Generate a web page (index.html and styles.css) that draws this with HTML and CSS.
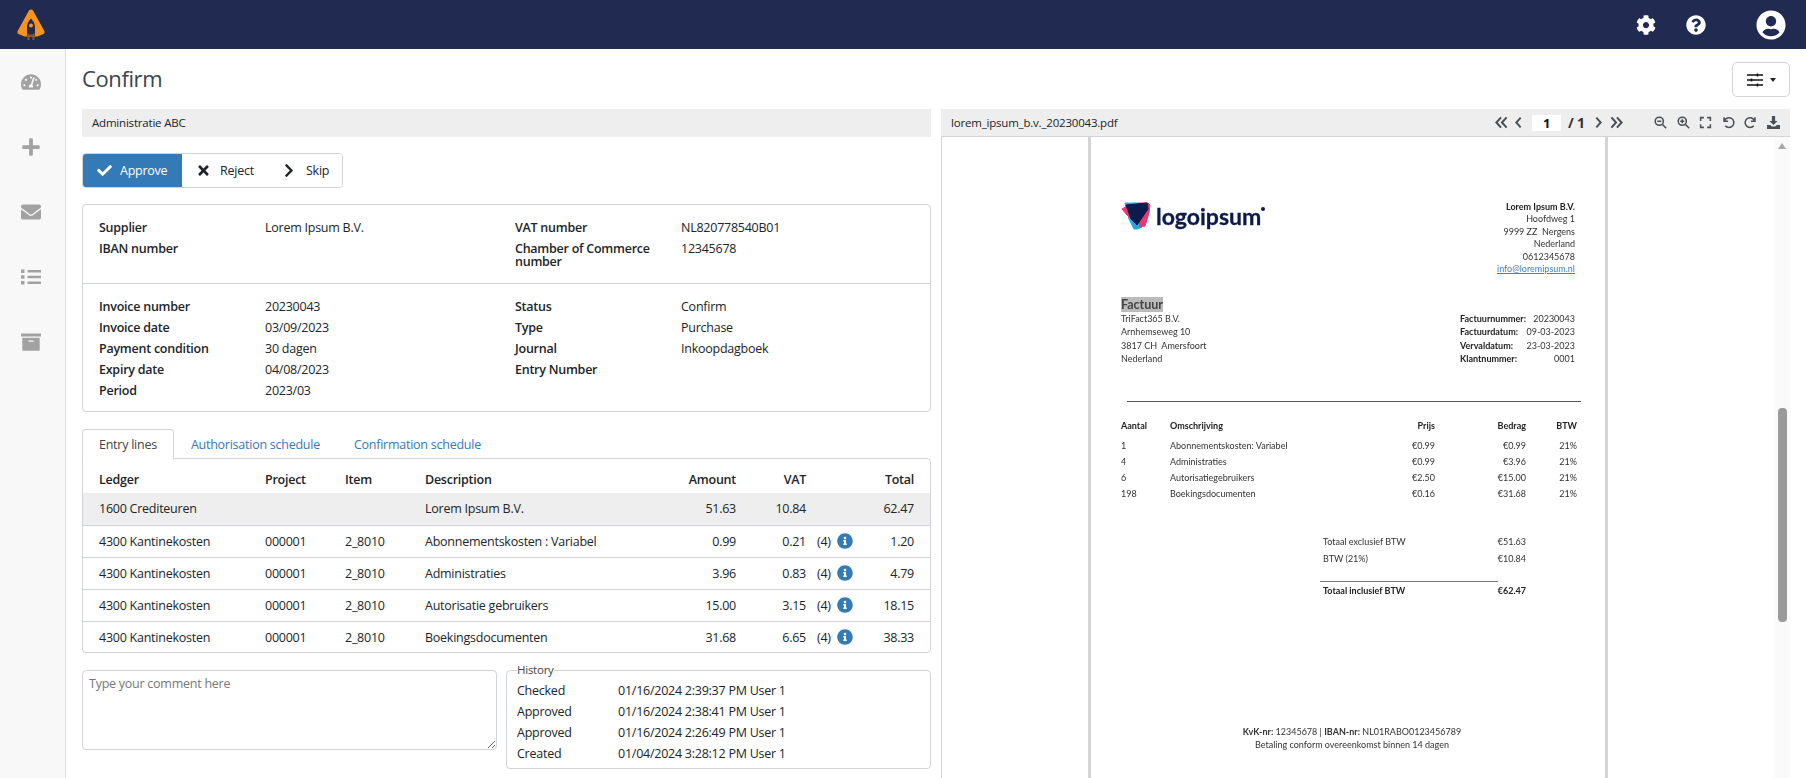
FILE: index.html
```html
<!DOCTYPE html>
<html lang="en">
<head>
<meta charset="utf-8">
<title>Confirm</title>
<link rel="stylesheet" href="styles.css">
</head>
<body>
<svg class="defs" aria-hidden="true"><symbol id="i-info" viewBox="0 0 512 512"><path d="M256 8C119.043 8 8 119.083 8 256c0 136.997 111.043 248 248 248s248-111.003 248-248C504 119.083 392.957 8 256 8zm0 110c23.196 0 42 18.804 42 42s-18.804 42-42 42-42-18.804-42-42 18.804-42 42-42zm56 254c0 6.627-5.373 12-12 12h-88c-6.627 0-12-5.373-12-12v-24c0-6.627 5.373-12 12-12h12v-64h-12c-6.627 0-12-5.373-12-12v-24c0-6.627 5.373-12 12-12h64c6.627 0 12 5.373 12 12v100h12c6.627 0 12 5.373 12 12v24z"/></symbol></svg>
<header class="topbar">
  <svg class="brand" viewBox="0 0 28 32"><path class="brand-a" d="M14 3 3 23 8 25H20L25 23Z"/><path class="brand-hole" d="M14 9.500C11.500 12 10 15 10 18V27H18V18C18 15 16.500 12 14 9.500Z"/><circle class="brand-dot" cx="14" cy="16.500" r="2"/><path class="brand-r" d="M10.500 31V24L12.500 25.500H15.500L17.500 24V31H15.500V28H12.500V31Z"/></svg>
  <div class="top-actions">
    <svg class="ti ti-gear" viewBox="0 0 512 512"><path d="M487.4 315.7l-42.6-24.6c4.300-23.200 4.300-47 0-70.200l42.600-24.600c4.900-2.800 7.100-8.600 5.500-14-11.100-35.600-30-67.800-54.700-94.600-3.800-4.100-10-5.100-14.800-2.300L380.800 110c-17.900-15.400-38.500-27.300-60.800-35.100V25.800c0-5.600-3.900-10.500-9.400-11.700-36.700-8.200-74.300-7.800-109.200 0-5.500 1.200-9.400 6.100-9.400 11.700V75c-22.200 7.900-42.800 19.800-60.800 35.100L88.700 85.500c-4.900-2.800-11-1.900-14.800 2.300-24.700 26.700-43.600 58.900-54.700 94.600-1.700 5.400.6 11.200 5.500 14L67.300 221c-4.300 23.200-4.300 47 0 70.200l-42.600 24.600c-4.900 2.800-7.100 8.600-5.500 14 11.100 35.600 30 67.800 54.700 94.600 3.800 4.100 10 5.100 14.800 2.300l42.600-24.600c17.900 15.400 38.500 27.300 60.800 35.100v49.200c0 5.600 3.900 10.500 9.400 11.700 36.700 8.200 74.300 7.800 109.200 0 5.500-1.200 9.400-6.100 9.400-11.700v-49.200c22.200-7.900 42.800-19.800 60.800-35.100l42.600 24.600c4.900 2.800 11 1.900 14.800-2.300 24.700-26.700 43.600-58.900 54.700-94.600 1.500-5.500-.7-11.300-5.600-14.100zM256 336c-44.100 0-80-35.900-80-80s35.900-80 80-80 80 35.900 80 80-35.900 80-80 80z"/></svg>
    <svg class="ti ti-help" viewBox="0 0 512 512"><path d="M504 256c0 136.997-111.043 248-248 248S8 392.997 8 256C8 119.083 119.043 8 256 8s248 111.083 248 248zM262.655 90c-54.497 0-89.255 22.957-116.549 63.758-3.536 5.286-2.353 12.415 2.715 16.258l34.699 26.310c5.205 3.947 12.621 3.008 16.665-2.122 17.864-22.658 30.113-35.797 57.303-35.797 20.429 0 45.698 13.148 45.698 32.958 0 14.976-12.363 22.667-32.534 33.976C247.128 238.528 216 254.941 216 296v4c0 6.627 5.373 12 12 12h56c6.627 0 12-5.373 12-12v-1.333c0-28.462 83.186-29.647 83.186-106.667 0-58.002-60.165-102-116.531-102zM256 338c-25.365 0-46 20.635-46 46 0 25.364 20.635 46 46 46s46-20.636 46-46c0-25.365-20.635-46-46-46z"/></svg>
    <svg class="ti ti-user" viewBox="0 0 496 512"><path d="M248 8C111 8 0 119 0 256s111 248 248 248 248-111 248-248S385 8 248 8zm0 96c48.600 0 88 39.400 88 88s-39.400 88-88 88-88-39.400-88-88 39.400-88 88-88zm0 344c-58.700 0-111.300-26.600-146.500-68.200 18.800-35.400 55.600-59.800 98.500-59.800 2.400 0 4.800.4 7.100 1.100 13 4.200 26.600 6.900 40.900 6.900 14.300 0 28-2.700 40.900-6.900 2.300-.7 4.700-1.100 7.100-1.100 42.900 0 79.700 24.400 98.500 59.800C359.300 421.400 306.700 448 248 448z"/></svg>
  </div>
</header>
<div class="shell">
  <nav class="sidebar">
    <svg class="si" viewBox="0 0 576 512"><path d="M288 32C128.940 32 0 160.940 0 320c0 52.800 14.250 102.260 39.060 144.800 5.610 9.620 16.300 15.200 27.440 15.200h443c11.140 0 21.830-5.580 27.440-15.200C561.750 422.260 576 372.800 576 320c0-159.060-128.940-288-288-288zm0 64c14.710 0 26.580 10.130 30.320 23.650-1.110 2.260-2.640 4.230-3.450 6.670l-9.220 27.670c-5.130 3.490-10.970 6.010-17.640 6.010-17.670 0-32-14.330-32-32S270.330 96 288 96zM96 384c-17.670 0-32-14.330-32-32s14.330-32 32-32 32 14.330 32 32-14.330 32-32 32zm48-160c-17.670 0-32-14.330-32-32s14.330-32 32-32 32 14.330 32 32-14.330 32-32 32zm246.770-72.410l-61.330 184C343.130 347.330 352 364.540 352 384c0 11.720-3.380 22.550-8.880 32H232.880c-5.500-9.450-8.880-20.280-8.880-32 0-33.940 26.500-61.430 59.900-63.590l61.340-184.010c4.170-12.560 17.730-19.450 30.360-15.170 12.570 4.190 19.350 17.790 15.170 30.360zm14.660 57.200l15.520-46.550c3.470-1.290 7.130-2.230 11.050-2.230 17.670 0 32 14.330 32 32s-14.330 32-32 32c-11.380-.01-20.890-6.280-26.570-15.220zM480 384c-17.670 0-32-14.330-32-32s14.330-32 32-32 32 14.330 32 32-14.330 32-32 32z"/></svg>
    <svg class="si" viewBox="0 0 448 512"><path d="M416 208H272V64c0-17.670-14.330-32-32-32h-32c-17.670 0-32 14.330-32 32v144H32c-17.670 0-32 14.330-32 32v32c0 17.670 14.330 32 32 32h144v144c0 17.670 14.330 32 32 32h32c17.670 0 32-14.330 32-32V304h144c17.670 0 32-14.330 32-32v-32c0-17.670-14.330-32-32-32z"/></svg>
    <svg class="si" viewBox="0 0 512 512"><path d="M502.300 190.800c3.900-3.100 9.700-.2 9.700 4.700V400c0 26.500-21.500 48-48 48H48c-26.500 0-48-21.500-48-48V195.600c0-5 5.700-7.800 9.700-4.700 22.400 17.400 52.100 39.500 154.100 113.600 21.100 15.400 56.700 47.800 92.200 47.600 35.700.3 72-32.800 92.300-47.600 102-74.100 131.600-96.300 154-113.700zM256 320c23.200.4 56.600-29.200 73.400-41.400 132.700-96.300 142.800-104.700 173.400-128.700 5.800-4.500 9.200-11.500 9.200-18.900v-19c0-26.500-21.500-48-48-48H48C21.500 64 0 85.500 0 112v19c0 7.400 3.400 14.300 9.200 18.900 30.600 23.900 40.700 32.400 173.400 128.700 16.800 12.200 50.200 41.800 73.400 41.400z"/></svg>
    <svg class="si" viewBox="0 0 20 20"><path d="M0 2.500h3.500v3.500H0zM0 8.200h3.500v3.500H0zM0 14h3.500v3.500H0zM6.500 3h13.500v2.500H6.500zM6.500 8.700h13.500v2.500H6.500zM6.500 14.500h13.500v2.500H6.500z"/></svg>
    <svg class="si" viewBox="0 0 20 20"><path d="M0 1.500h20v3H0zM1.300 5.800h17.400v12.200a.8.8 0 0 1-.8.8H2.100a.8.8 0 0 1-.8-.8zM7.500 8.500v1.300h5v-1.300z" fill-rule="evenodd"/></svg>
  </nav>
  <main class="main">
    <div class="titlebar">
      <h1 class="title">Confirm</h1>
      <button class="filter-btn" type="button">
        <svg class="sliders" viewBox="0 0 16 14"><path d="M0 2h16M0 7h16M0 12h16" /><path class="knob" d="M10.500 0.500v3M4.500 5.500v3M10.500 10.500v3"/></svg>
        <span class="caret"></span>
      </button>
    </div>
    <div class="columns">
      <section class="left">
        <div class="admin-bar">Administratie ABC</div>
        <div class="btn-group">
          <button class="btn btn-approve" type="button"><svg class="bi" viewBox="0 0 512 512"><path d="M173.898 439.404l-166.400-166.400c-9.997-9.997-9.997-26.206 0-36.204l36.203-36.204c9.997-9.998 26.207-9.998 36.204 0L192 312.690 432.095 72.596c9.997-9.997 26.207-9.997 36.204 0l36.203 36.204c9.997 9.997 9.997 26.206 0 36.204l-294.400 294.401c-9.998 9.997-26.207 9.997-36.204-.001z"/></svg>Approve</button>
          <button class="btn btn-reject" type="button"><svg class="bi bi-x" viewBox="0 0 352 512"><path d="M242.720 256l100.070-100.070c12.280-12.280 12.280-32.190 0-44.480l-22.240-22.240c-12.280-12.280-32.190-12.280-44.480 0L176 189.280 75.930 89.210c-12.280-12.280-32.190-12.280-44.480 0L9.210 111.450c-12.280 12.280-12.280 32.190 0 44.480L109.280 256 9.210 356.070c-12.280 12.280-12.280 32.190 0 44.480l22.240 22.240c12.280 12.280 32.200 12.280 44.480 0L176 322.720l100.070 100.070c12.280 12.280 32.200 12.280 44.480 0l22.240-22.240c12.280-12.280 12.280-32.190 0-44.480L242.720 256z"/></svg>Reject</button>
          <button class="btn btn-skip" type="button"><svg class="bi bi-c" viewBox="0 0 320 512"><path d="M285.476 272.971L91.132 467.314c-9.373 9.373-24.569 9.373-33.941 0l-22.667-22.667c-9.357-9.357-9.375-24.522-.04-33.901L188.505 256 34.484 101.255c-9.335-9.379-9.317-24.544.04-33.901l22.667-22.667c9.373-9.373 24.569-9.373 33.941 0L285.475 239.030c9.373 9.372 9.373 24.568.001 33.941z"/></svg>Skip</button>
        </div>
        <div class="card details">
          <div class="detail-sec sec-top">
            <dl class="dl">
              <dt>Supplier</dt><dd>Lorem Ipsum B.V.</dd>
              <dt>IBAN number</dt><dd></dd>
            </dl>
            <dl class="dl">
              <dt>VAT number</dt><dd>NL820778540B01</dd>
              <dt class="two">Chamber of Commerce number</dt><dd>12345678</dd>
            </dl>
          </div>
          <div class="detail-sec sec-bottom">
            <dl class="dl">
              <dt>Invoice number</dt><dd>20230043</dd>
              <dt>Invoice date</dt><dd>03/09/2023</dd>
              <dt>Payment condition</dt><dd>30 dagen</dd>
              <dt>Expiry date</dt><dd>04/08/2023</dd>
              <dt>Period</dt><dd>2023/03</dd>
            </dl>
            <dl class="dl">
              <dt>Status</dt><dd>Confirm</dd>
              <dt>Type</dt><dd>Purchase</dd>
              <dt>Journal</dt><dd>Inkoopdagboek</dd>
              <dt>Entry Number</dt><dd></dd>
            </dl>
          </div>
        </div>
        <div class="tabs">
          <span class="tab tab-active">Entry lines</span>
          <span class="tab">Authorisation schedule</span>
          <span class="tab">Confirmation schedule</span>
        </div>
        <div class="table-wrap">
          <table class="lines">
            <colgroup><col class="c1"><col class="c2"><col class="c3"><col class="c4"><col class="c5"><col class="c6"><col class="c7"><col class="c8"></colgroup>
            <thead>
              <tr><th>Ledger</th><th>Project</th><th>Item</th><th>Description</th><th class="num">Amount</th><th class="num">VAT</th><th></th><th class="num">Total</th></tr>
            </thead>
            <tbody>
              <tr class="hl"><td>1600 Crediteuren</td><td></td><td></td><td>Lorem Ipsum B.V.</td><td class="num">51.63</td><td class="num">10.84</td><td></td><td class="num">62.47</td></tr>
              <tr><td>4300 Kantinekosten</td><td>000001</td><td>2_8010</td><td>Abonnementskosten : Variabel</td><td class="num">0.99</td><td class="num">0.21</td><td class="note">(4) <svg class="info"><use href="#i-info"/></svg></td><td class="num">1.20</td></tr>
              <tr><td>4300 Kantinekosten</td><td>000001</td><td>2_8010</td><td>Administraties</td><td class="num">3.96</td><td class="num">0.83</td><td class="note">(4) <svg class="info"><use href="#i-info"/></svg></td><td class="num">4.79</td></tr>
              <tr><td>4300 Kantinekosten</td><td>000001</td><td>2_8010</td><td>Autorisatie gebruikers</td><td class="num">15.00</td><td class="num">3.15</td><td class="note">(4) <svg class="info"><use href="#i-info"/></svg></td><td class="num">18.15</td></tr>
              <tr><td>4300 Kantinekosten</td><td>000001</td><td>2_8010</td><td>Boekingsdocumenten</td><td class="num">31.68</td><td class="num">6.65</td><td class="note">(4) <svg class="info"><use href="#i-info"/></svg></td><td class="num">38.33</td></tr>
            </tbody>
          </table>
        </div>
        <div class="bottom-row">
          <textarea class="comment" placeholder="Type your comment here"></textarea>
          <fieldset class="history">
            <legend>History</legend>
            <div class="hist-row"><span>Checked</span><span>01/16/2024 2:39:37 PM User 1</span></div>
            <div class="hist-row"><span>Approved</span><span>01/16/2024 2:38:41 PM User 1</span></div>
            <div class="hist-row"><span>Approved</span><span>01/16/2024 2:26:49 PM User 1</span></div>
            <div class="hist-row"><span>Created</span><span>01/04/2024 3:28:12 PM User 1</span></div>
          </fieldset>
        </div>
      </section>
      <section class="viewer">
        <div class="pdf-bar">
          <span class="pdf-name">lorem_ipsum_b.v._20230043.pdf</span>
          <div class="pdf-tools">
            <svg class="pi pi-w" viewBox="0 0 14 14"><path d="M6.500 1.500 1.500 7l5 5.500M12.500 1.500 7.500 7l5 5.500"/></svg>
            <svg class="pi pi-n" viewBox="0 0 8 14"><path d="M6.500 1.500 1.500 7l5 5.500"/></svg>
            <span class="page-input">1</span>
            <span class="page-total">/ 1</span>
            <svg class="pi pi-n" viewBox="0 0 8 14"><path d="M1.500 1.500 6.500 7l-5 5.500"/></svg>
            <svg class="pi pi-w" viewBox="0 0 14 14"><path d="M1.500 1.500 6.500 7l-5 5.500M7.500 1.500 12.500 7l-5 5.500"/></svg>
            <span class="tool-gap"></span>
            <svg class="pz" viewBox="0 0 16 16"><circle cx="6.500" cy="6.500" r="5"/><path d="M10.500 10.500 15 15M4 6.500h5"/></svg>
            <svg class="pz" viewBox="0 0 16 16"><circle cx="6.500" cy="6.500" r="5"/><path d="M10.500 10.500 15 15M4 6.500h5M6.500 4v5"/></svg>
            <svg class="pz" viewBox="0 0 16 16"><path d="M2 6V2h4M10 2h4v4M14 10v4h-4M6 14H2v-4"/></svg>
            <svg class="pz" viewBox="0 0 16 16"><path d="M3 6a6 6 0 1 1 1 6M2.500 1.500V6.500H7.500"/></svg>
            <svg class="pz" viewBox="0 0 16 16"><path d="M13 6a6 6 0 1 0-1 6M13.500 1.500V6.500H8.500"/></svg>
            <svg class="pd" viewBox="0 0 16 16"><path d="M6 0h4v6h3L8 11 3 6h3zM0 11h4l2 2h4l2-2h4v5H0z"/></svg>
          </div>
        </div>
        <div class="pdf-body">
          <div class="pdf-scroll">
            <article class="page">
              <div class="inv-head">
                <div class="logo">
                  <svg class="logo-mark" viewBox="0 0 30 30"><path class="lm-blue" d="M4 2H16L21 26 16 28 13 28 8 18Z"/><path class="lm-pink" d="M1 8 8 4 13 20 6 14Z"/><path class="lm-pink" d="M16 2H27L29 4 28 12 24 25 19 26Z"/><path class="lm-navy" d="M5 4 26 2 27 8 16 24 10 18Z"/></svg>
                  <span class="logo-text">logoipsum</span><span class="logo-dot"></span>
                </div>
                <address class="inv-from">
                  <b>Lorem Ipsum B.V.</b>
                  <span>Hoofdweg 1</span>
                  <span>9999 ZZ&nbsp; Nergens</span>
                  <span>Nederland</span>
                  <span>0612345678</span>
                  <span class="inv-mail">info@loremipsum.nl</span>
                </address>
              </div>
              <div class="inv-meta">
                <div class="inv-to">
                  <h2 class="inv-title"><span>Factuur</span></h2>
                  <span>TriFact365 B.V.</span>
                  <span>Arnhemseweg 10</span>
                  <span>3817 CH&nbsp; Amersfoort</span>
                  <span>Nederland</span>
                </div>
                <div class="inv-refs">
                  <b>Factuurnummer:</b><span>20230043</span>
                  <b>Factuurdatum:</b><span>09-03-2023</span>
                  <b>Vervaldatum:</b><span>23-03-2023</span>
                  <b>Klantnummer:</b><span>0001</span>
                </div>
              </div>
              <hr class="inv-rule">
              <div class="inv-lines">
                <b>Aantal</b><b>Omschrijving</b><b class="r">Prijs</b><b class="r">Bedrag</b><b class="r">BTW</b>
                <span>1</span><span>Abonnementskosten: Variabel</span><span class="r">€0.99</span><span class="r">€0.99</span><span class="r">21%</span>
                <span>4</span><span>Administraties</span><span class="r">€0.99</span><span class="r">€3.96</span><span class="r">21%</span>
                <span>6</span><span>Autorisatiegebruikers</span><span class="r">€2.50</span><span class="r">€15.00</span><span class="r">21%</span>
                <span>198</span><span>Boekingsdocumenten</span><span class="r">€0.16</span><span class="r">€31.68</span><span class="r">21%</span>
              </div>
              <div class="inv-totals">
                <div class="tot-row"><span>Totaal exclusief BTW</span><span>€51.63</span></div>
                <div class="tot-row"><span>BTW (21%)</span><span>€10.84</span></div>
                <hr class="tot-rule">
                <div class="tot-row"><b>Totaal inclusief BTW</b><b>€62.47</b></div>
              </div>
              <footer class="inv-foot">
                <p><b>KvK-nr:</b> 12345678 | <b>IBAN-nr:</b> NL01RABO0123456789</p>
                <p>Betaling conform overeenkomst binnen 14 dagen</p>
              </footer>
            </article>
          </div>
          <div class="scrollbar"><span class="sb-up"></span><span class="sb-thumb"></span></div>
        </div>
      </section>
    </div>
  </main>
</div>
</body>
</html>
```
FILE: styles.css
```css
* { box-sizing: border-box; }
html, body { margin: 0; height: 778px; overflow: hidden; }
body { font-family: "Open Sans", "Noto Sans", sans-serif; font-size: 12.500px; letter-spacing: -0.25px; color: #212529; background: #fff; }
.defs { display: none; }

.topbar { height: 49px; background: #212a50; display: flex; align-items: center; justify-content: space-between; padding: 0 20px 0 17px; }
.brand { width: 28px; height: 32px; }
.brand-a { fill: #f7941d; stroke: #f7941d; stroke-width: 5; stroke-linejoin: round; }
.brand-hole { fill: #212a50; }
.brand-dot { fill: #f7941d; }
.brand-r { fill: #8a5a2c; }
.top-actions { display: flex; align-items: center; }
.ti { fill: #fff; display: block; }
.ti-gear { width: 20px; height: 20px; }
.ti-help { width: 20px; height: 20px; margin-left: 30px; }
.ti-user { width: 30px; height: 30px; margin-left: 50px; }

.shell { display: flex; height: 729px; }
.sidebar { width: 66px; flex: none; background: #f8f8f8; border-right: 1px solid #ddd; display: flex; flex-direction: column; align-items: center; padding-top: 23px; gap: 45px; padding-right: 4px; }
.si { width: 20px; height: 20px; fill: #a2a2a2; display: block; }

.main { flex: 1; min-width: 0; padding: 0 16px; }
.titlebar { height: 60px; display: flex; justify-content: space-between; align-items: flex-start; padding-top: 13px; }
.title { margin: -1px 0 0; font-size: 22px; font-weight: 400; letter-spacing: -0.4px; line-height: 34px; color: #3a4550; }
.filter-btn { width: 58px; height: 35px; background: #fff; border: 1px solid #d0d3d8; border-radius: 5px; display: flex; align-items: center; justify-content: center; gap: 7px; padding: 0; }
.sliders { width: 16px; height: 14px; fill: none; stroke: #111; stroke-width: 1.6; }
.caret { border-top: 4px solid #222; border-left: 3.500px solid transparent; border-right: 3.500px solid transparent; }

.columns { display: grid; grid-template-columns: 849px 849px; column-gap: 10px; }

.admin-bar { height: 28px; background: #eee; line-height: 28px; padding-left: 10px; font-size: 11.500px; letter-spacing: -0.2px; }
.btn-group { display: inline-flex; height: 35px; margin-top: 16px; margin-bottom: 16px; border: 1px solid #d0d3d8; border-radius: 4px; overflow: hidden; vertical-align: top; }
.btn { border: 0; background: #fff; display: flex; align-items: center; font: inherit; letter-spacing: inherit; color: #212529; padding: 0; }
.btn-approve { width: 100px; margin: -1px 0 -1px -1px; background: #337ab7; color: #fff; padding-left: 15px; }
.btn-reject { width: 85px; padding-left: 16px; }
.btn-skip { width: 75px; padding-left: 17px; }
.bi { width: 15px; height: 15px; fill: currentColor; margin-right: 8px; flex: none; }
.bi-x { width: 11px; margin-right: 11px; }
.bi-c { width: 10px; margin-right: 12px; }

.card { border: 1px solid #d0d3d8; border-radius: 4px; }
.details { height: 208px; }
.detail-sec { display: grid; grid-template-columns: 416px 1fr; padding: 12px 16px 0; }
.sec-top { height: 79px; border-bottom: 1px solid #d0d3d8; }
.dl { display: grid; grid-template-columns: 166px 1fr; grid-auto-rows: minmax(21px, auto); margin: 0; line-height: 21px; align-content: start; }
.dl dt { font-weight: 600; }
.dl dd { margin: 0; }
.dl dt.two { line-height: 13px; padding-top: 4px; }

.tabs { display: flex; height: 30px; margin-top: 17px; margin-bottom: -1px; position: relative; z-index: 1; }
.tab { padding: 0 17px; line-height: 31px; color: #337ab7; }
.tab-active { color: #444; background: #fff; border: 1px solid #d0d3d8; border-bottom-color: #fff; border-radius: 4px 4px 0 0; height: 31px; padding: 0 16px; line-height: 29px; }
.table-wrap { border: 1px solid #d0d3d8; border-radius: 0 4px 4px 4px; height: 195px; overflow: hidden; }
.lines { width: 100%; border-collapse: collapse; table-layout: fixed; }
.c1 { width: 182px; } .c2 { width: 80px; } .c3 { width: 80px; } .c4 { width: 240px; } .c5 { width: 71px; } .c6 { width: 70px; } .c7 { width: 56px; }
.lines th, .lines td { text-align: left; padding: 0; height: 32px; white-space: nowrap; }
.lines th { height: 34px; padding-top: 7px; font-weight: 600; }
.lines th:first-child, .lines td:first-child { padding-left: 16px; }
.lines th:last-child, .lines td:last-child { padding-right: 16px; }
.lines tbody tr { border-top: 1px solid #d0d3d8; }
.lines tbody tr:first-child { border-top: 0; }
.lines .num { text-align: right; }
.lines .hl { background: #eee; }
.lines td.note { padding-left: 11px; }
.info { width: 16px; height: 16px; fill: #337ab7; vertical-align: -3px; margin-left: 3px; }

.bottom-row { display: grid; grid-template-columns: 415px 425px; column-gap: 9px; margin-top: 17px; align-items: start; }
.comment { height: 80px; width: 100%; border: 1px solid #d0d3d8; border-radius: 4px; padding: 4px 6px; font: inherit; letter-spacing: inherit; color: #212529; display: block; }
.comment::placeholder { color: #777; }
.history { margin: -6px 0 0; padding: 4px 10px 4px; border: 1px solid #d0d3d8; border-radius: 4px; height: 105px; min-width: 0; }
.history legend { padding: 0; font-size: 11.500px; line-height: 12px; color: #444; }
.hist-row { display: grid; grid-template-columns: 101px 1fr; line-height: 21px; }

.pdf-bar { height: 28px; background: #eee; border-bottom: 1px solid #d0d3d8; display: flex; align-items: center; justify-content: space-between; padding: 0 10px; font-size: 11.500px; letter-spacing: -0.2px; }
.pdf-tools { display: flex; align-items: center; color: #444; }
.pi { height: 13px; fill: none; stroke: #495057; stroke-width: 2.200; }
.pi-w { width: 13px; }
.pi-n { width: 7px; margin-left: 7px; }
.page-input { width: 29px; height: 16px; background: #fff; text-align: center; line-height: 16px; font-weight: 700; font-size: 13px; color: #111; margin: 0 7px 0 10px; }
.page-total { font-weight: 700; font-size: 14px; color: #333; width: 27px; }
.pi-n + .pi-w { margin-left: 8px; }
.page-total + .pi-n { margin-left: 0; }
.tool-gap { width: 31px; }
.pz { width: 13px; height: 13px; fill: none; stroke: #495057; stroke-width: 1.900; margin-right: 9.600px; }
.pd { width: 13px; height: 13px; fill: #495057; }

.pdf-body { display: flex; height: 641px; border-left: 1px solid #d0d3d8; }
.pdf-scroll { flex: 1; min-width: 0; padding-left: 146px; overflow: hidden; }
.page { width: 520px; height: 641px; border-left: 3px solid #d4d4d4; border-right: 3px solid #d4d4d4; background: #fff; padding: 64px 0 0 30px; font-family: "Lato", sans-serif; font-size: 9px; letter-spacing: 0; color: #333; filter: blur(0.3px); }
.scrollbar { width: 16px; flex: none; background: #fafafa; display: flex; flex-direction: column; align-items: center; padding-top: 6px; }
.sb-up { border-bottom: 6px solid #a8a8a8; border-left: 4.500px solid transparent; border-right: 4.500px solid transparent; }
.sb-thumb { width: 9px; height: 214px; background: #9a9a9a; border-radius: 4px; margin-top: 259px; }

.inv-head { display: flex; justify-content: space-between; height: 95.500px; padding-right: 30px; }
.logo { display: flex; align-items: flex-start; }
.logo-mark { width: 30px; height: 30px; }
.lm-blue { fill: #22a7e0; stroke: #22a7e0; stroke-linejoin: round; }
.lm-pink { fill: #e8386f; stroke: #e8386f; stroke-linejoin: round; }
.lm-navy { fill: #0d1b4c; stroke: #0d1b4c; stroke-linejoin: round; }
.logo-text { font-family: "Lato", sans-serif; font-weight: 700; font-size: 23px; letter-spacing: 0; line-height: 30px; color: #0d1b4c; margin-left: 5px; -webkit-text-stroke: 0.3px #0d1b4c; }
.logo-dot { width: 4px; height: 4px; border-radius: 50%; background: #0d1b4c; margin-top: 6px; margin-left: 0; }
.inv-from { font-style: normal; display: flex; flex-direction: column; text-align: right; line-height: 12.400px; }
.inv-from b { font-weight: 700; color: #222; }
.inv-mail { color: #3b82d6; text-decoration: underline; }
.inv-meta { display: flex; justify-content: space-between; padding-right: 30px; }
.inv-to { display: flex; flex-direction: column; line-height: 13.500px; }
.inv-title { margin: 0; font-size: 12.500px; line-height: 15px; color: #444; font-weight: 700; }
.inv-title span { background: #bbb; }
.inv-refs { display: grid; grid-template-columns: 72px 43px; line-height: 13.500px; padding-top: 15px; white-space: nowrap; }
.inv-refs b { color: #222; }
.inv-refs span { justify-self: end; }
.inv-rule { margin: 35px 24px 0 6px; border: 0; border-top: 1px solid #555; }
.inv-lines { display: grid; grid-template-columns: 49px 217px 48px 91px 51px; margin-top: 16px; line-height: 16px; }
.inv-lines b:nth-child(-n+5) { margin-bottom: 4px; color: #222; }
.r { text-align: right; }
.inv-totals { width: 203px; margin: 31px 0 0 202px; line-height: 17px; }
.tot-row { display: flex; justify-content: space-between; }
.tot-rule { margin: 14px 28px 0 -3px; border: 0; border-top: 1px solid #777; }
.tot-row b { color: #222; }
.inv-foot { margin: 126px 0 0 0; text-align: center; line-height: 13px; padding: 0 52px 0 30px; }
.inv-foot p { margin: 0; }
```
